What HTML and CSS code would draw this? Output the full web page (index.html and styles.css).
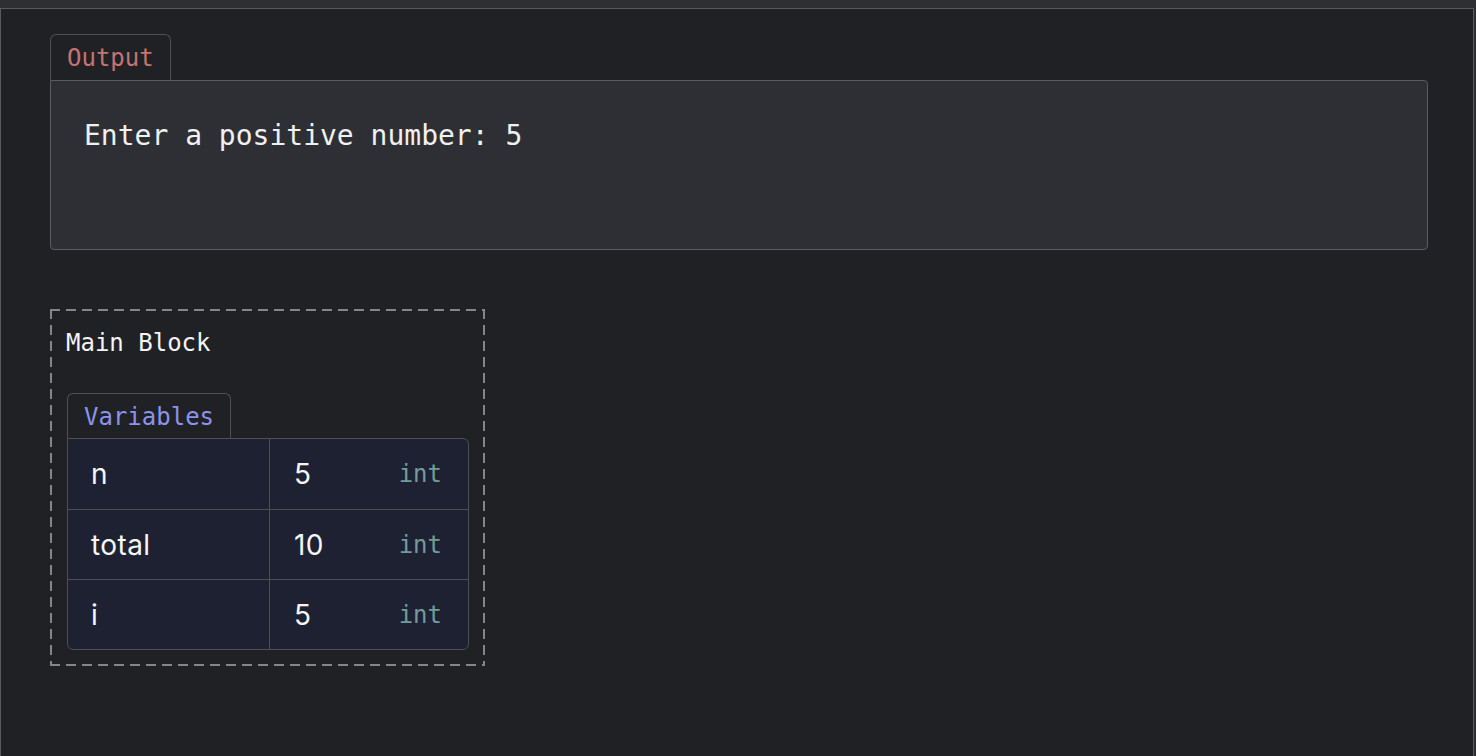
FILE: index.html
```html
<!DOCTYPE html>
<html>
<head>
<meta charset="utf-8">
<link rel="stylesheet" href="styles.css">
</head>
<body>
<div class="panel">
  <section class="output">
    <div class="tab tab-output">Output</div>
    <div class="output-box">Enter a positive number: 5</div>
  </section>
  <section class="block">
    <div class="block-title">Main Block</div>
    <div class="tab tab-vars">Variables</div>
    <div class="vars">
      <div class="row">
        <div class="cell name">n</div>
        <div class="cell value"><span>5</span><span class="type">int</span></div>
      </div>
      <div class="row">
        <div class="cell name">total</div>
        <div class="cell value"><span>10</span><span class="type">int</span></div>
      </div>
      <div class="row">
        <div class="cell name">i</div>
        <div class="cell value"><span>5</span><span class="type">int</span></div>
      </div>
    </div>
  </section>
</div>
</body>
</html>
```

FILE: styles.css
```css
html, body {
  margin: 0;
  padding: 0;
}
body {
  background: #2e2f33;
  width: 1476px;
  height: 756px;
  overflow: hidden;
}
.panel {
  box-sizing: border-box;
  margin-top: 8px;
  width: 1474px;
  height: 748px;
  background: #202124;
  border: 1px solid #58595d;
  border-bottom: none;
  padding: 25px 45px 0 49px;
}
.tab {
  display: inline-block;
  font-family: "DejaVu Sans Mono", monospace;
  font-size: 24px;
  line-height: 28px;
  padding: 9px 16px 8px;
  border: 1px solid #4f5055;
  border-bottom: none;
  border-radius: 6px 6px 0 0;
  background: #202124;
  vertical-align: top;
}
.tab-output {
  color: #c77373;
}
.tab-vars {
  color: #8b93ea;
  padding-bottom: 7px;
}
.output-box {
  box-sizing: border-box;
  height: 170px;
  background: #2e2f34;
  border: 1px solid #5a5b60;
  border-radius: 0 4px 4px 4px;
  padding: 38px 33px 0;
  font-family: "DejaVu Sans Mono", monospace;
  font-size: 28px;
  line-height: 34px;
  color: #f0f0f0;
}
.block {
  margin-top: 59px;
  width: 402px;
  padding: 20px 16px 16px 17px;
  background:
    repeating-linear-gradient(90deg, #858585 0 10px, transparent 10px 16px) top left / 100% 2px no-repeat,
    repeating-linear-gradient(90deg, #858585 0 10px, transparent 10px 16px) bottom left / 100% 2px no-repeat,
    repeating-linear-gradient(180deg, #858585 0 10px, transparent 10px 16px) top left / 2px 100% no-repeat,
    repeating-linear-gradient(180deg, #858585 0 10px, transparent 10px 16px) top right / 2px 100% no-repeat;
}
.block-title {
  font-family: "DejaVu Sans Mono", monospace;
  font-size: 24px;
  line-height: 28px;
  color: #f4f4f4;
  margin-left: -1px;
  margin-bottom: 36px;
}
.vars {
  background: #1e2132;
  border: 1px solid #4e4f55;
  border-radius: 0 6px 6px 6px;
  overflow: hidden;
}
.row {
  box-sizing: border-box;
  display: grid;
  grid-template-columns: 202px 1fr;
  height: 70px;
  border-top: 1px solid #4e4f55;
}
.row:first-child {
  border-top: none;
}
.cell {
  display: flex;
  align-items: center;
  font-family: "Inter", "Lato", sans-serif;
  font-size: 28px;
  letter-spacing: 0.4px;
  color: #f6f6f6;
}
.name {
  padding-left: 23px;
  border-right: 1px solid #4e4f55;
}
.value {
  justify-content: space-between;
  padding-left: 24px;
  padding-right: 26px;
}
.type {
  font-family: "DejaVu Sans Mono", monospace;
  font-size: 24px;
  letter-spacing: 0;
  color: #729c9c;
}
```
